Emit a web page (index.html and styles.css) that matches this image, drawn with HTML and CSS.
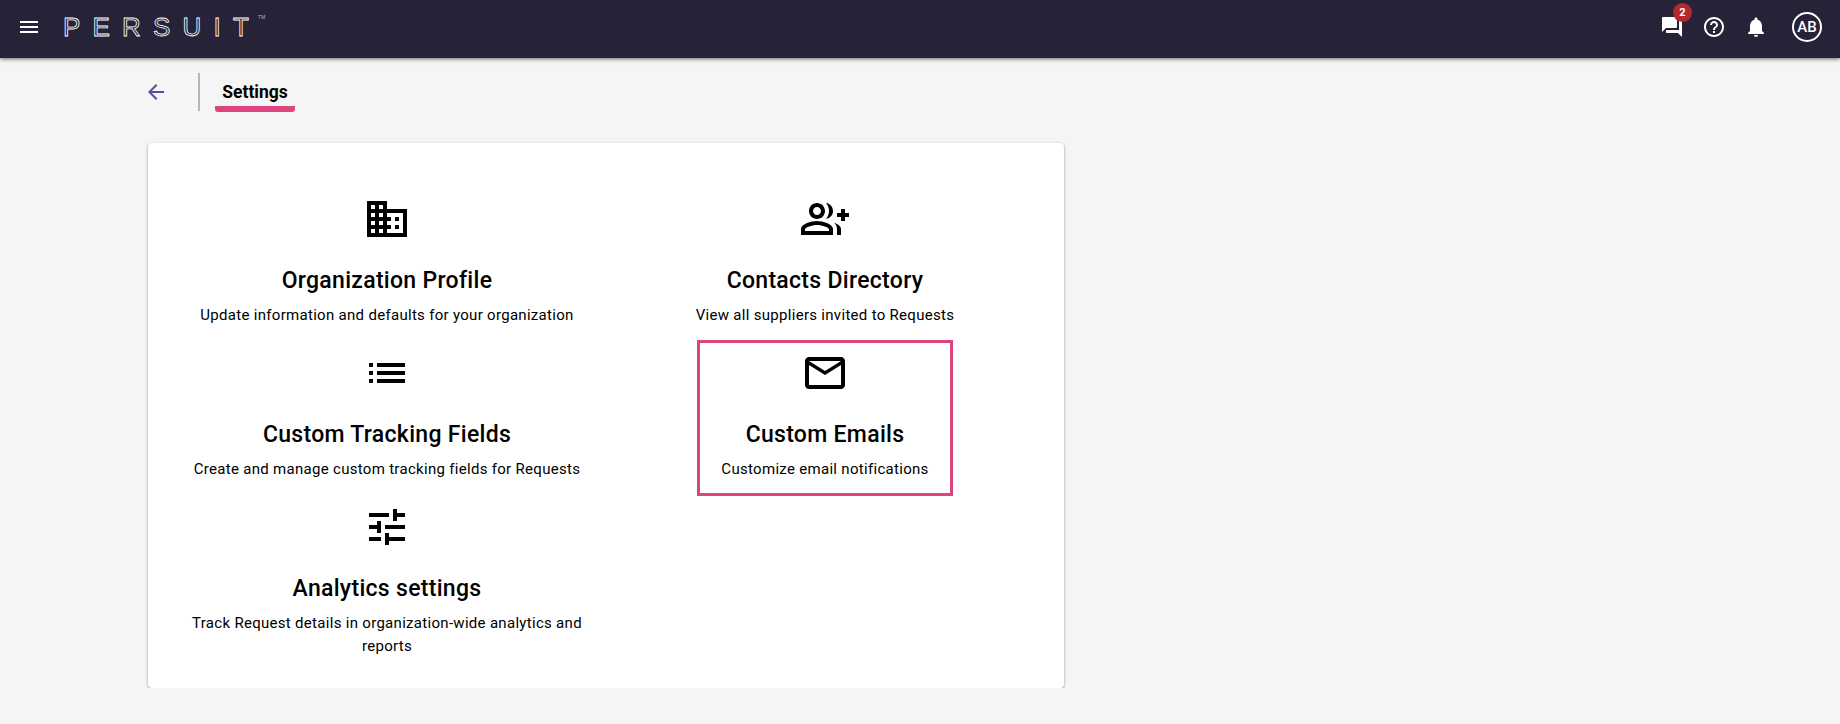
FILE: index.html
```html
<!DOCTYPE html>
<html lang="en">

<head>
    <meta charset="UTF-8">
    <title>Settings | Persuit</title>
    <link rel="stylesheet" href="styles.css">
</head>

<body>
    <header class="nav">
        <svg class="ic menu" viewBox="0 0 24 24"><path d="M3 18h18v-2H3v2zm0-5h18v-2H3v2zm0-7v2h18V6H3z"/></svg>
        <div class="logo">PERSUIT<span class="tm">TM</span></div>
        <div class="nav-r">
            <div class="msg">
                <svg class="ic" viewBox="0 0 24 24"><path d="M21 6h-2v9H6v2c0 .55.45 1 1 1h11l4 4V7c0-.55-.45-1-1-1zm-4 6V3c0-.55-.45-1-1-1H3c-.55 0-1 .45-1 1v14l4-4h10c.55 0 1-.45 1-1z"/></svg>
                <span class="badge">2</span>
            </div>
            <svg class="ic" viewBox="0 0 24 24"><path d="M11 18h2v-2h-2v2zm1-16C6.48 2 2 6.48 2 12s4.48 10 10 10 10-4.48 10-10S17.52 2 12 2zm0 18c-4.41 0-8-3.59-8-8s3.59-8 8-8 8 3.59 8 8-3.59 8-8 8zm0-14c-2.21 0-4 1.79-4 4h2c0-1.1.9-2 2-2s2 .9 2 2c0 2-3 1.75-3 5h2c0-2.25 3-2.5 3-5 0-2.21-1.79-4-4-4z"/></svg>
            <svg class="ic" viewBox="0 0 24 24"><path d="M12 22c1.1 0 2-.9 2-2h-4c0 1.1.89 2 2 2zm6-6v-5c0-3.07-1.64-5.64-4.5-6.32V4c0-.83-.67-1.5-1.5-1.5s-1.5.67-1.5 1.5v.68C7.63 5.36 6 7.92 6 11v5l-2 2v1h16v-1l-2-2z"/></svg>
            <div class="avatar">AB</div>
        </div>
    </header>

    <main class="page">
        <div class="sub">
            <svg class="ic back" viewBox="0 0 24 24"><path d="M20 11H7.83l5.59-5.59L12 4l-8 8 8 8 1.41-1.41L7.83 13H20v-2z"/></svg>
            <div class="sep"></div>
            <div class="tab">Settings</div>
        </div>

        <section class="card">
            <div class="item">
                <svg class="big" viewBox="0 0 24 24"><path d="M12 7V3H2v18h20V7H12zM6 19H4v-2h2v2zm0-4H4v-2h2v2zm0-4H4V9h2v2zm0-4H4V5h2v2zm4 12H8v-2h2v2zm0-4H8v-2h2v2zm0-4H8V9h2v2zm0-4H8V5h2v2zm10 12h-8v-2h2v-2h-2v-2h2v-2h-2V9h8v10zm-2-8h-2v2h2v-2zm0 4h-2v2h2v-2z"/></svg>
                <h2>Organization Profile</h2>
                <p>Update information and defaults for your organization</p>
            </div>
            <div class="item">
                <svg class="big" viewBox="0 0 24 24"><path d="M22 9V7h-2v2h-2v2h2v2h2v-2h2V9zM8 12c2.21 0 4-1.79 4-4s-1.79-4-4-4-4 1.79-4 4 1.79 4 4 4zm0-6c1.1 0 2 .9 2 2s-.9 2-2 2-2-.9-2-2 .9-2 2-2zM8 13c-2.67 0-8 1.34-8 4v3h16v-3c0-2.66-5.33-4-8-4zm6 5H2v-.99C2.2 16.29 5.3 15 8 15s5.8 1.29 6 2v1zM12.51 4.05C13.43 5.11 14 6.49 14 8s-.57 2.89-1.49 3.95C14.47 11.7 16 10.04 16 8s-1.53-3.7-3.49-3.95zM16.53 13.83c.89.83 1.47 1.87 1.47 3.17v3h2v-3c0-1.45-1.59-2.51-3.47-3.17z"/></svg>
                <h2>Contacts Directory</h2>
                <p>View all suppliers invited to Requests</p>
            </div>
            <div class="item">
                <svg class="big" viewBox="0 0 24 24"><path d="M3 13h2v-2H3v2zm0 4h2v-2H3v2zm0-8h2V7H3v2zm4 4h14v-2H7v2zm0 4h14v-2H7v2zM7 7v2h14V7H7z"/></svg>
                <h2>Custom Tracking Fields</h2>
                <p>Create and manage custom tracking fields for Requests</p>
            </div>
            <div class="item on">
                <svg class="big" viewBox="0 0 24 24"><path d="M20 4H4c-1.1 0-1.99.9-1.99 2L2 18c0 1.1.9 2 2 2h16c1.1 0 2-.9 2-2V6c0-1.1-.9-2-2-2zm0 14H4V8l8 5 8-5v10zm-8-7L4 6h16l-8 5z"/></svg>
                <h2>Custom Emails</h2>
                <p>Customize email notifications</p>
            </div>
            <div class="item">
                <svg class="big" viewBox="0 0 24 24"><path d="M3 17v2h6v-2H3zM3 5v2h10V5H3zm10 16v-2h8v-2h-8v-2h-2v6h2zM7 9v2H3v2h4v2h2V9H7zm14 4v-2H11v2h10zm-6-4h2V7h4V5h-4V3h-2v6z"/></svg>
                <h2>Analytics settings</h2>
                <p>Track Request details in organization-wide analytics and reports</p>
            </div>
        </section>
    </main>
</body>

</html>
```

FILE: styles.css
```css
* {
    box-sizing: border-box;
}

body {
    font-family: Roboto, Arial, sans-serif;
    background: #f5f5f5;
    margin: 0;
    padding: 0;
    color: #000;
}

.ic {
    display: block;
    width: 24px;
    height: 24px;
    fill: #fff;
}

.nav {
    display: flex;
    align-items: center;
    height: 58px;
    padding: 0 18px 4px 17px;
    background: #262338;
    box-shadow: 0 1px 4px rgba(0, 0, 0, 0.6);
}

.logo {
    display: flex;
    margin-left: 22px;
    margin-bottom: 1px;
    font-family: "Liberation Sans", Arial, sans-serif;
    font-size: 26px;
    line-height: 26px;
    letter-spacing: 12.2px;
    color: transparent;
    -webkit-text-stroke: 0.8px #fff;
}

.tm {
    margin: 1px 0 0 -3px;
    font-size: 5px;
    line-height: 5px;
    letter-spacing: 0;
    color: #bbb;
    -webkit-text-stroke: 0;
}

.nav-r {
    display: flex;
    align-items: center;
    gap: 18px;
    margin-left: auto;
}

.msg {
    position: relative;
}

.badge {
    position: absolute;
    top: -12px;
    left: 13px;
    width: 19px;
    height: 19px;
    border-radius: 50%;
    background: #b3282d;
    color: #fff;
    font-size: 11px;
    font-weight: 700;
    line-height: 19px;
    text-align: center;
}

.avatar {
    width: 30px;
    height: 30px;
    margin-left: 6px;
    border: 2px solid #fff;
    border-radius: 50%;
    color: #fff;
    font-size: 15px;
    font-weight: 500;
    line-height: 26px;
    text-align: center;
}

.page {
    padding: 0 148px;
}

.sub {
    display: flex;
    align-items: flex-start;
    height: 85px;
    padding-top: 15px;
    margin-left: -4px;
}

.back {
    margin-top: 7px;
    fill: #5b4ba0;
}

.sep {
    width: 2px;
    height: 38px;
    margin-left: 30px;
    background: #b5b5b5;
}

.tab {
    width: 80px;
    height: 39px;
    margin-left: 15px;
    padding-top: 9px;
    border-bottom: 6px solid #dd4480;
    border-radius: 0 0 3px 3px;
    font-size: 17.5px;
    font-weight: 700;
    line-height: 20px;
    text-align: center;
    white-space: nowrap;
}

.card {
    display: grid;
    grid-template-columns: 438px 438px;
    align-items: start;
    align-content: start;
    justify-items: center;
    row-gap: 2px;
    width: 916px;
    height: 545px;
    padding: 45px 20px 0;
    background: #fff;
    border-radius: 4px;
    box-shadow: 0 1px 3px rgba(0, 0, 0, 0.4);
}

.item {
    display: flex;
    flex-direction: column;
    align-items: center;
    height: 152px;
    padding: 7px 22px 0;
    text-align: center;
}

.item.on {
    outline: 3px solid #dd4480;
    outline-offset: -1px;
}

.big {
    display: block;
    flex: none;
    width: 48px;
    height: 48px;
}

.item h2 {
    flex: none;
    margin: 23px 0 0;
    font-size: 23px;
    font-weight: 500;
    line-height: 30px;
    letter-spacing: 0.3px;
}

.item p {
    flex: none;
    margin: 8px 0 0;
    font-size: 15px;
    line-height: 23px;
    letter-spacing: 0.3px;
}
```
